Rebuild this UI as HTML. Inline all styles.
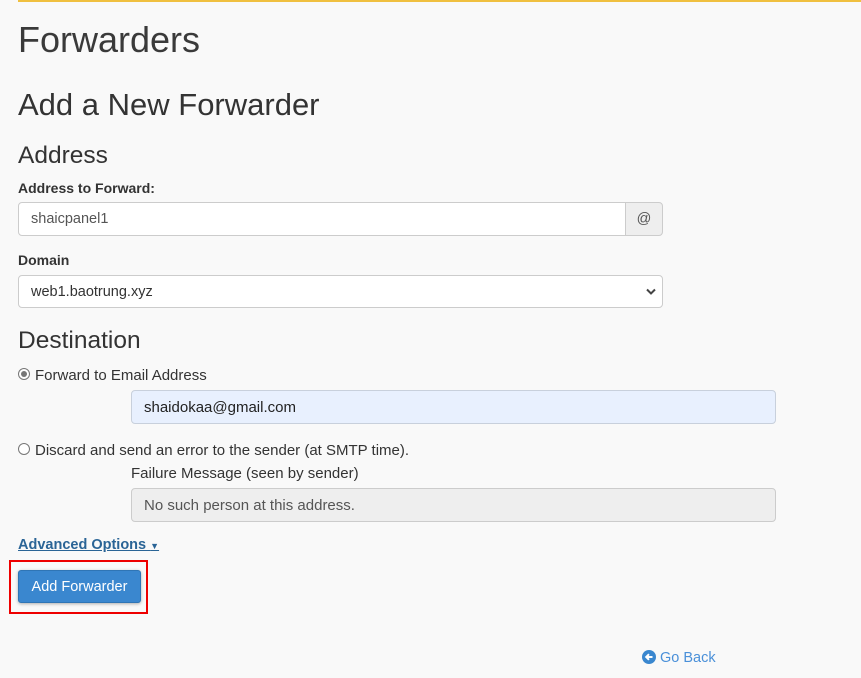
<!DOCTYPE html>
<html><head><style>
body{margin:0;width:861px;height:678px;background:#f9f9f9;font-family:"Liberation Sans",sans-serif;color:#333;position:relative;overflow:hidden}
.a{position:absolute;white-space:nowrap}
.inp{position:absolute;box-sizing:border-box;border:1px solid #ccc;border-radius:4px;background:#fff;font-size:14.5px;padding-left:12px;line-height:33px;color:#555}
</style></head><body>
<div class="a" style="left:18px;top:0;width:843px;height:2px;background:#f0c040"></div>
<div class="a" style="left:18px;top:19px;font-size:36px;color:#3a3a3a">Forwarders</div>
<div class="a" style="left:18px;top:87px;font-size:31px;color:#333">Add a New Forwarder</div>
<div class="a" style="left:18px;top:142px;font-size:24.5px">Address</div>
<div class="a" style="left:18px;top:180px;font-size:14px;font-weight:bold">Address to Forward:</div>
<div class="inp" style="left:18px;top:202px;width:608px;height:34px;border-radius:4px 0 0 4px">shaicpanel1</div>
<div class="inp" style="left:625px;top:202px;width:38px;height:34px;border-radius:0 4px 4px 0;background:#eee;padding:0;text-align:center">@</div>
<div class="a" style="left:18px;top:252px;font-size:14px;font-weight:bold">Domain</div>
<div class="inp" style="left:18px;top:275px;width:645px;height:33px;color:#333">web1.baotrung.xyz
<svg style="position:absolute;right:6px;top:12px" width="10" height="8" viewBox="0 0 10 8"><path d="M1 1.5L5 5.5L9 1.5" stroke="#444" stroke-width="2" fill="none"/></svg></div>
<div class="a" style="left:18px;top:327px;font-size:24.5px">Destination</div>
<div class="a" style="left:18px;top:368px;width:12px;height:12px;border:1px solid #777;border-radius:50%;box-sizing:border-box;background:#fff"><div style="position:absolute;left:2px;top:2px;width:6px;height:6px;border-radius:50%;background:#777"></div></div>
<div class="a" style="left:35px;top:367px;font-size:15px">Forward to Email Address</div>
<div class="inp" style="left:131px;top:390px;width:645px;height:34px;background:#e8f0fe;color:#222;border-color:#c8d0dc;font-size:15px">shaidokaa@gmail.com</div>
<div class="a" style="left:18px;top:443px;width:12px;height:12px;border:1px solid #777;border-radius:50%;box-sizing:border-box;background:#fff"></div>
<div class="a" style="left:35px;top:442px;font-size:15px">Discard and send an error to the sender (at SMTP time).</div>
<div class="a" style="left:131px;top:465px;font-size:15px">Failure Message (seen by sender)</div>
<div class="inp" style="left:131px;top:488px;width:645px;height:34px;background:#eee;font-size:15px">No such person at this address.</div>
<div class="a" style="left:18px;top:537px;font-size:14.5px;font-weight:bold;color:#2a6496;text-decoration:underline">Advanced Options <span style="font-size:9px;text-decoration:none">&#9660;</span></div>
<div class="a" style="left:9px;top:560px;width:139px;height:54px;box-sizing:border-box;border:2px solid #e00"></div>
<div class="a" style="left:18px;top:570px;width:123px;height:33px;background:#3a87cf;border:1px solid #2f75b5;box-sizing:border-box;border-radius:3px;color:#fff;font-size:14.5px;text-align:center;line-height:32px;box-shadow:0 1px 3px rgba(0,0,0,.3)">Add Forwarder</div>
<svg class="a" style="left:642px;top:650px" width="14" height="14" viewBox="0 0 14 14"><circle cx="7" cy="7" r="7" fill="#3a87cf"/><path d="M10.5 7H4.5M7 4.2L4.2 7L7 9.8" stroke="#fff" stroke-width="2" fill="none"/></svg>
<div class="a" style="left:660px;top:650px;font-size:14.5px;color:#4a90d9">Go Back</div>
</body></html>
